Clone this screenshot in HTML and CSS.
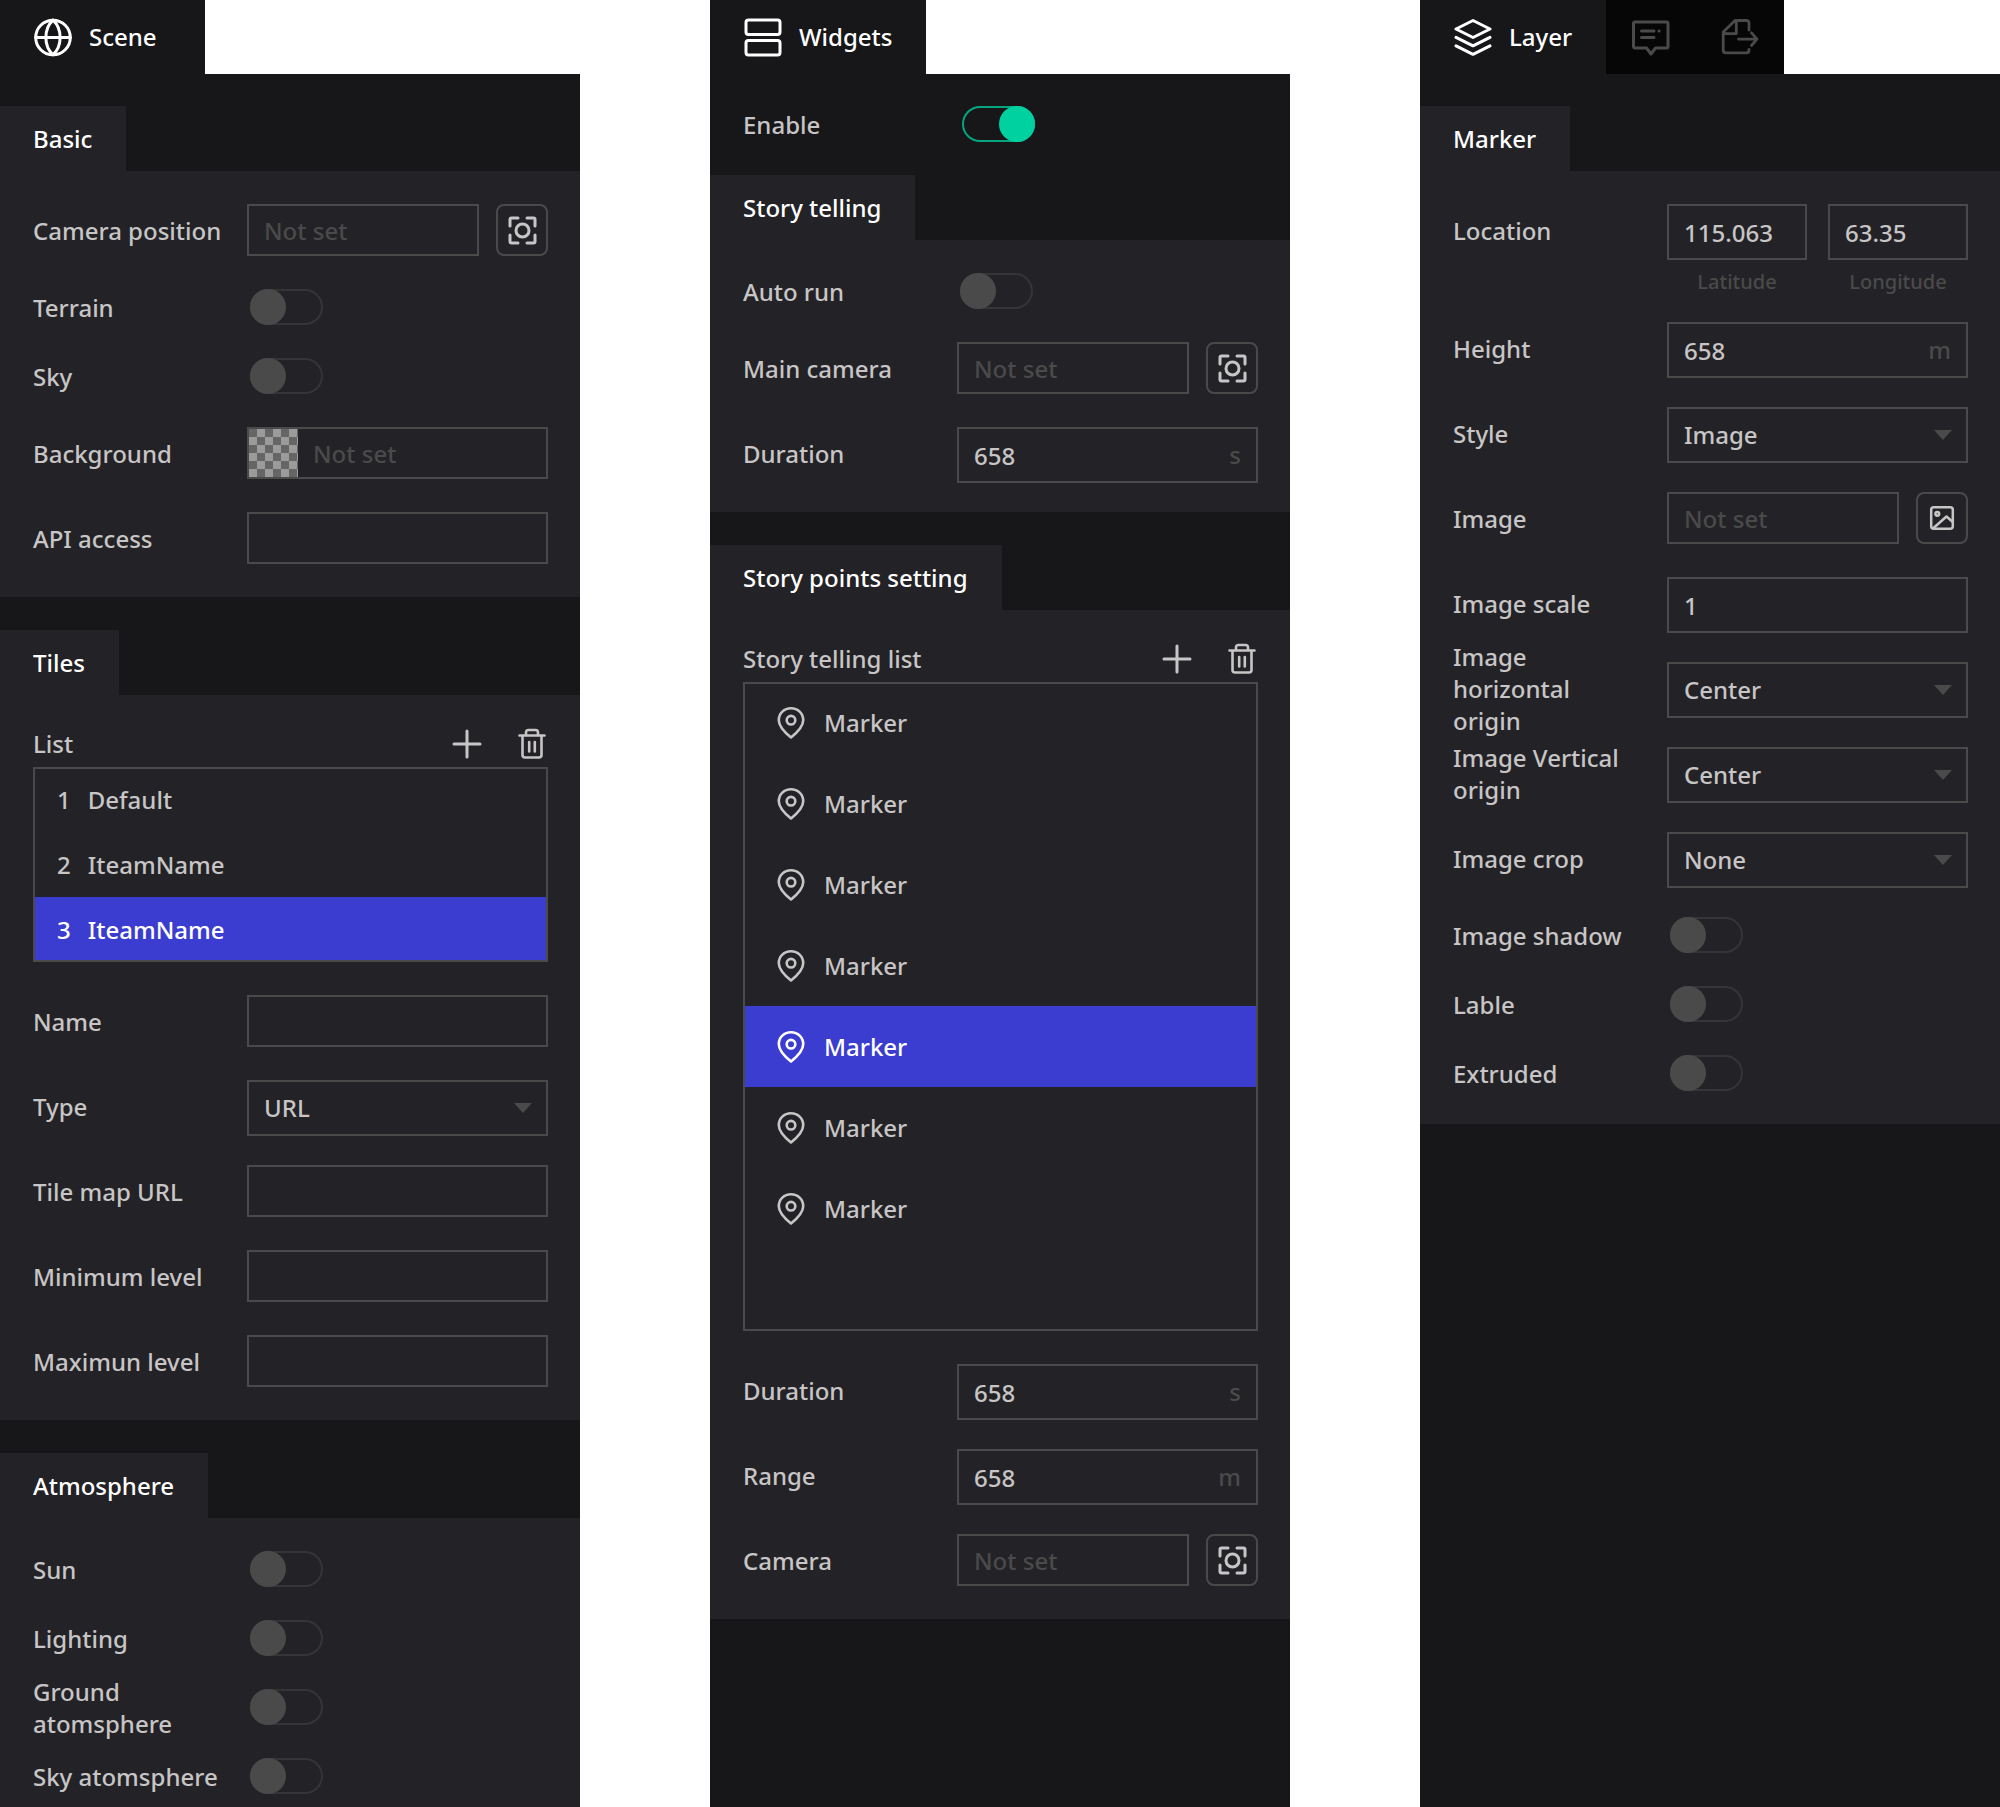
FILE: index.html
```html
<!DOCTYPE html>
<html lang="en">
<head>
<meta charset="utf-8">
<title>Property panels</title>
<link rel="stylesheet" href="styles.css">
</head>
<body>
<svg class="sprite" aria-hidden="true">
  <symbol id="i-capture" viewBox="0 0 29 29"><path d="M2 10V3.500Q2 2 3.500 2H10M19 2h6.500Q27 2 27 3.500V10M27 19v6.500Q27 27 25.500 27H19M10 27H3.500Q2 27 2 25.500V19" stroke-width="3"/><circle cx="14.500" cy="14.500" r="6.500" stroke-width="3"/></symbol>
  <symbol id="i-image" viewBox="0 0 26 26"><g stroke-width="2.500"><rect x="2.200" y="2.200" width="21.600" height="21.600" rx="2.500"/><circle cx="8.300" cy="8.800" r="1.900"/><path d="M4.500 23L17.500 11.500L23.800 17"/></g></symbol>
  <symbol id="i-plus" viewBox="0 0 32 32"><path d="M16 3v26M3 16h26" stroke-width="3"/></symbol>
  <symbol id="i-trash" viewBox="0 0 32 32"><path d="M3.500 7.500h25M10 7V4.500Q10 2 12.500 2h7Q22 2 22 4.500V7M6.500 8v19q0 2.500 2.500 2.500h14q2.500 0 2.500-2.500V8M13.200 14v9.500M18.800 14v9.500" stroke-width="2.600"/></symbol>
  <symbol id="i-pin" viewBox="0 0 32 32"><g stroke-width="2.600"><path d="M16 30.500C10.500 26 3.800 20 3.800 13.200C3.800 6.300 9.200 1.300 16 1.300S28.200 6.300 28.200 13.200C28.200 20 21.500 26 16 30.500Z"/><circle cx="16" cy="13.200" r="4.300"/></g></symbol>
</svg>

<main class="board">
  <section class="panel">
    <nav class="tabs">
      <button class="tab active wide" type="button">
        <svg class="icon-lg" viewBox="0 0 39 39"><g stroke-width="3"><circle cx="20" cy="19.500" r="17.300"/><path d="M2.700 19.500h34.600M20 2.200C10.500 11 10.500 28 20 36.800C29.500 28 29.500 11 20 2.200"/></g></svg>
        Scene
      </button>
    </nav>
    <div class="panel-body">
      <div class="group">
        <h2 class="group-title">Basic</h2>
        <div class="group-body">
          <div class="row"><label for="cam-pos">Camera position</label><div class="field pair"><input class="box" id="cam-pos" type="text" placeholder="Not set"><button class="icon-btn" type="button" aria-label="Capture camera"><svg class="icon-cap"><use href="#i-capture"/></svg></button></div></div>
          <div class="row short"><label for="terrain">Terrain</label><input class="switch" id="terrain" type="checkbox"></div>
          <div class="row short"><label for="sky">Sky</label><input class="switch" id="sky" type="checkbox"></div>
          <div class="row"><label for="bg">Background</label><div class="field box composite"><span class="swatch"></span><input id="bg" type="text" placeholder="Not set"></div></div>
          <div class="row"><label for="api">API access</label><input class="box" id="api" type="text"></div>
        </div>
      </div>
      <div class="group">
        <h2 class="group-title">Tiles</h2>
        <div class="group-body">
          <div class="list-block">
            <div class="list-head"><span>List</span><button class="bare" type="button" aria-label="Add tile"><svg class="icon"><use href="#i-plus"/></svg></button><button class="bare" type="button" aria-label="Delete tile"><svg class="icon"><use href="#i-trash"/></svg></button></div>
            <ul class="list">
              <li class="item"><span>1</span><span>Default</span></li>
              <li class="item"><span>2</span><span>IteamName</span></li>
              <li class="item selected"><span>3</span><span>IteamName</span></li>
            </ul>
          </div>
          <div class="row"><label for="name">Name</label><input class="box" id="name" type="text"></div>
          <div class="row"><label for="type">Type</label><div class="select tall"><select class="box" id="type"><option>URL</option></select></div></div>
          <div class="row"><label for="tile-url">Tile map URL</label><input class="box" id="tile-url" type="text"></div>
          <div class="row"><label for="min">Minimum level</label><input class="box" id="min" type="text"></div>
          <div class="row"><label for="max">Maximun level</label><input class="box" id="max" type="text"></div>
        </div>
      </div>
      <div class="group">
        <h2 class="group-title">Atmosphere</h2>
        <div class="group-body">
          <div class="row short"><label for="sun">Sun</label><input class="switch" id="sun" type="checkbox"></div>
          <div class="row short"><label for="light">Lighting</label><input class="switch" id="light" type="checkbox"></div>
          <div class="row short"><label for="ground">Ground atomsphere</label><input class="switch" id="ground" type="checkbox"></div>
          <div class="row short"><label for="sky-atm">Sky atomsphere</label><input class="switch" id="sky-atm" type="checkbox"></div>
        </div>
      </div>
    </div>
  </section>

  <section class="panel">
    <nav class="tabs">
      <button class="tab active" type="button">
        <svg class="icon-lg" viewBox="0 0 39 39"><g stroke-width="3"><rect x="3" y="2" width="34" height="14.500" rx="2.500"/><rect x="3" y="22.500" width="34" height="14.500" rx="2.500"/></g></svg>
        Widgets
      </button>
    </nav>
    <div class="panel-body">
      <div class="row short"><label for="enable">Enable</label><input class="switch" id="enable" type="checkbox" checked></div>
      <div class="group">
        <h2 class="group-title">Story telling</h2>
        <div class="group-body">
          <div class="row short"><label for="auto">Auto run</label><input class="switch" id="auto" type="checkbox"></div>
          <div class="row"><label for="main-cam">Main camera</label><div class="field pair"><input class="box" id="main-cam" type="text" placeholder="Not set"><button class="icon-btn" type="button" aria-label="Capture camera"><svg class="icon-cap"><use href="#i-capture"/></svg></button></div></div>
          <div class="row"><label for="dur1">Duration</label><div class="field box composite tall"><input id="dur1" type="text" value="658"><span class="unit">s</span></div></div>
        </div>
      </div>
      <div class="group">
        <h2 class="group-title">Story points setting</h2>
        <div class="group-body">
          <div class="list-block">
            <div class="list-head"><span>Story telling list</span><button class="bare" type="button" aria-label="Add story point"><svg class="icon"><use href="#i-plus"/></svg></button><button class="bare" type="button" aria-label="Delete story point"><svg class="icon"><use href="#i-trash"/></svg></button></div>
            <ul class="list roomy">
              <li class="item"><svg class="icon"><use href="#i-pin"/></svg><span>Marker</span></li>
              <li class="item"><svg class="icon"><use href="#i-pin"/></svg><span>Marker</span></li>
              <li class="item"><svg class="icon"><use href="#i-pin"/></svg><span>Marker</span></li>
              <li class="item"><svg class="icon"><use href="#i-pin"/></svg><span>Marker</span></li>
              <li class="item selected"><svg class="icon"><use href="#i-pin"/></svg><span>Marker</span></li>
              <li class="item"><svg class="icon"><use href="#i-pin"/></svg><span>Marker</span></li>
              <li class="item"><svg class="icon"><use href="#i-pin"/></svg><span>Marker</span></li>
            </ul>
          </div>
          <div class="row"><label for="dur2">Duration</label><div class="field box composite tall"><input id="dur2" type="text" value="658"><span class="unit">s</span></div></div>
          <div class="row"><label for="range">Range</label><div class="field box composite tall"><input id="range" type="text" value="658"><span class="unit">m</span></div></div>
          <div class="row"><label for="cam">Camera</label><div class="field pair"><input class="box" id="cam" type="text" placeholder="Not set"><button class="icon-btn" type="button" aria-label="Capture camera"><svg class="icon-cap"><use href="#i-capture"/></svg></button></div></div>
        </div>
      </div>
    </div>
  </section>

  <section class="panel">
    <nav class="tabs">
      <button class="tab active" type="button">
        <svg class="icon-lg" viewBox="0 0 39 39"><path d="M20 2.500L37 11L20 19.500L3 11ZM3 19.300L20 27.800L37 19.300M3 27.800L20 36.300L37 27.800" stroke-width="3"/></svg>
        Layer
      </button>
      <button class="tab" type="button" aria-label="Infobox"><svg class="icon-lg" viewBox="0 0 39 39"><path d="M4 4h31.500Q37 4 37 5.500v23Q37 30 35.500 30H24.500L20 36L15.500 30H4Q2.500 30 2.500 28.500v-23Q2.500 4 4 4ZM10.500 13h12.500M10.500 19.500h12.500M28 13h.1" stroke-width="3"/></svg></button>
      <button class="tab" type="button" aria-label="Export"><svg class="icon-lg" viewBox="0 0 39 39"><path d="M29 12V5q0-2.500-2.500-2.500H15L3.200 14V32q0 2.800 2.800 2.800H26.500q2.500 0 2.500-2.500V31.500M16.300 3V15.600H3.500M18.500 21.200H37M31.500 14.800L37 21.200L31.500 27.500" stroke-width="2.800"/></svg></button>
    </nav>
    <div class="panel-body">
      <div class="group">
        <h2 class="group-title">Marker</h2>
        <div class="group-body">
          <div class="row location"><span class="label">Location</span>
            <div class="coords">
              <div class="coord"><input class="box tall" id="lat" type="text" value="115.063"><label for="lat">Latitude</label></div>
              <div class="coord"><input class="box tall" id="lng" type="text" value="63.35"><label for="lng">Longitude</label></div>
            </div>
          </div>
          <div class="row"><label for="height">Height</label><div class="field box composite tall"><input id="height" type="text" value="658"><span class="unit">m</span></div></div>
          <div class="row"><label for="style">Style</label><div class="select tall"><select class="box" id="style"><option>Image</option></select></div></div>
          <div class="row"><label for="image">Image</label><div class="field pair"><input class="box" id="image" type="text" placeholder="Not set"><button class="icon-btn" type="button" aria-label="Choose image"><svg class="icon-img"><use href="#i-image"/></svg></button></div></div>
          <div class="row"><label for="scale">Image scale</label><input class="box tall" id="scale" type="text" value="1"></div>
          <div class="row"><label for="h-origin">Image<br>horizontal<br>origin</label><div class="select tall"><select class="box" id="h-origin"><option>Center</option></select></div></div>
          <div class="row"><label for="v-origin">Image Vertical origin</label><div class="select tall"><select class="box" id="v-origin"><option>Center</option></select></div></div>
          <div class="row"><label for="crop">Image crop</label><div class="select tall"><select class="box" id="crop"><option>None</option></select></div></div>
          <div class="row short"><label for="shadow">Image shadow</label><input class="switch" id="shadow" type="checkbox"></div>
          <div class="row short"><label for="lable">Lable</label><input class="switch" id="lable" type="checkbox"></div>
          <div class="row short"><label for="extruded">Extruded</label><input class="switch" id="extruded" type="checkbox"></div>
        </div>
      </div>
    </div>
  </section>
</main>
</body>
</html>
```
FILE: styles.css
```css
:root {
  --panel: #171719;
  --section: #232226;
  --line: #4a4a4a;
  --text: #c7c5c5;
  --select: #3b3cd0;
  --on: #00d1a0;
}

* { box-sizing: border-box; }

body {
  margin: 0;
  background: #fff;
  color: var(--text);
  font: 500 24px/32px "Noto Sans", sans-serif;
}

button, input, select { font: inherit; color: inherit; margin: 0; }

svg {
  display: block;
  flex: none;
  fill: none;
  stroke: currentColor;
  stroke-linecap: round;
  stroke-linejoin: round;
}

.sprite { display: none; }
.icon-lg { width: 39px; height: 39px; }
.icon { width: 32px; height: 32px; }
.icon-cap { width: 29px; height: 29px; }
.icon-img { width: 26px; height: 26px; }

.board {
  display: grid;
  grid-template-columns: repeat(3, minmax(0, 1fr));
  column-gap: 130px;
  height: 100vh;
  overflow: hidden;
}

.panel { display: flex; flex-direction: column; }

.tabs { display: flex; flex: none; height: 74px; }

.tab {
  display: flex;
  align-items: center;
  gap: 17px;
  padding: 0 25px;
  border: 0;
  background: #060606;
  color: var(--line);
}

.tab.active {
  padding: 0 34px 0 33px;
  background: var(--panel);
  color: #fff;
}

.tab.wide { padding-right: 48px; }

.panel-body {
  flex: 1;
  display: flex;
  flex-direction: column;
  gap: 33px;
  padding-top: 32px;
  background: var(--panel);
}

.panel-body > .row { padding: 0 32px 0 33px; }

.group { flex: none; }

.group-title {
  width: max-content;
  margin: 0;
  padding: 17px 34px 16px 33px;
  background: var(--section);
  color: #fff;
  font-size: 24px;
  font-weight: 500;
}

.group-body {
  display: flex;
  flex-direction: column;
  gap: 33px;
  padding: 33px 32px 33px 33px;
  background: var(--section);
}

.row {
  display: grid;
  grid-template-columns: 194px minmax(0, 1fr);
  grid-template-rows: 100%;
  column-gap: 20px;
  height: 52px;
}

.row.short { height: 36px; }
.row.location { height: 85px; }
.row > label { align-self: center; margin: -24px 0; padding-top: 2px; }
.row > .label { padding-top: 11px; }

.box {
  width: 100%;
  height: 52px;
  padding: 0 15px;
  border: 2px solid var(--line);
  border-radius: 0;
  background: transparent;
  outline: 0;
}

.tall { height: 56px; }

::placeholder { color: var(--line); opacity: 1; }

.field { display: flex; }
.pair { gap: 17px; }

.icon-btn {
  flex: none;
  display: grid;
  place-items: center;
  width: 52px;
  height: 52px;
  padding: 0;
  border: 2px solid var(--line);
  border-radius: 8px;
  background: transparent;
}

.composite { align-items: center; padding: 0; }

.composite input {
  flex: 1;
  min-width: 0;
  height: 100%;
  padding: 0 15px;
  border: 0;
  background: transparent;
  outline: 0;
}

.unit { padding-right: 15px; color: var(--line); }

.swatch {
  width: 49px;
  height: 48px;
  background: conic-gradient(#9b9b9b 25%, #666 0 50%, #9b9b9b 0 75%, #666 0) 0 0 / 16px 16px;
}

.select { display: grid; align-items: center; }
.select select { grid-area: 1 / 1; height: 100%; appearance: none; }

.select::after {
  content: "";
  grid-area: 1 / 1;
  justify-self: end;
  width: 18px;
  height: 10px;
  margin-right: 16px;
  background: var(--line);
  clip-path: polygon(0 0, 100% 0, 50% 100%);
  pointer-events: none;
}

.switch {
  appearance: none;
  display: flex;
  width: 73px;
  height: 36px;
  margin-left: 3px;
  border-radius: 18px;
  box-shadow: inset 0 0 0 2px #353537;
}

.switch::before {
  content: "";
  width: 36px;
  height: 36px;
  border-radius: 50%;
  background: var(--line);
}

.switch:checked {
  justify-content: flex-end;
  margin-left: 5px;
  box-shadow: inset 0 0 0 2px #06a580;
}

.switch:checked::before { background: var(--on); }

.list-block { display: flex; flex-direction: column; gap: 8px; }

.list-head { display: flex; gap: 33px; height: 31px; }
.list-head > span { flex: 1; }

.bare { height: 32px; padding: 0; border: 0; background: none; }

.list {
  margin: 0;
  padding: 0;
  list-style: none;
  outline: 2px solid var(--line);
  outline-offset: -2px;
}

.item {
  display: flex;
  align-items: center;
  gap: 17px;
  height: 65px;
  padding: 0 24px;
}

.roomy { padding-bottom: 82px; }
.roomy .item { height: 81px; padding: 0 32px; }
.item.selected { background: var(--select); color: #fff; }

.coords { display: grid; grid-template-columns: 1fr 1fr; column-gap: 21px; }
.coord { text-align: center; font-size: 20px; line-height: 28px; color: var(--line); }
.coord .box { font-size: 24px; color: var(--text); }
.coord label { display: block; padding-top: 8px; }
```
